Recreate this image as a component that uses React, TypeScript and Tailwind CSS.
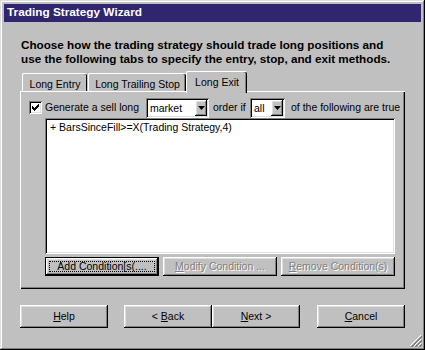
import React from "react";

const raised =
  "shadow-[inset_-1px_-1px_0_#000,inset_1px_1px_0_#fff,inset_-2px_-2px_0_#808080,inset_2px_2px_0_#dfdfdf]";
const sunken =
  "shadow-[inset_1px_1px_0_#808080,inset_-1px_-1px_0_#fff,inset_2px_2px_0_#000,inset_-2px_-2px_0_#dfdfdf]";

function Combo({ value, width }: { value: string; width: string }) {
  return (
    <div className={`flex h-[20px] items-stretch bg-white p-[2px] ${sunken} ${width}`}>
      <span className="flex-1 pl-[2px] leading-[16px]">{value}</span>
      <span className={`flex w-[12px] items-center justify-center bg-[#c0c0c0] ${raised}`}>
        <svg width="7" height="4" viewBox="0 0 7 4">
          <path d="M0 0h7L3.5 4z" fill="#000" />
        </svg>
      </span>
    </div>
  );
}

function Button({
  children,
  disabled,
  focused,
  className = "",
}: {
  children: React.ReactNode;
  disabled?: boolean;
  focused?: boolean;
  className?: string;
}) {
  if (focused) {
    return (
      <div className={`border border-black bg-[#c0c0c0] ${className}`}>
        <div className={`flex h-full items-center justify-center p-[3px] ${raised}`}>
          <span className="flex h-full w-full items-center justify-center border border-dotted border-black">
            {children}
          </span>
        </div>
      </div>
    );
  }
  return (
    <div
      className={`flex items-center justify-center bg-[#c0c0c0] ${raised} ${
        disabled ? "text-[#808080] [text-shadow:1px_1px_0_#fff]" : ""
      } ${className}`}
    >
      {children}
    </div>
  );
}

export default function App() {
  return (
    <div className="relative flex h-[350px] w-[425px] flex-col whitespace-nowrap bg-[#c0c0c0] p-[4px] font-['Liberation_Sans',Arial,sans-serif] text-[10.5px] text-black shadow-[inset_-1px_-1px_0_#000,inset_1px_1px_0_#dfdfdf,inset_-2px_-2px_0_#808080,inset_2px_2px_0_#fff]">
      {/* Title bar */}
      <div className="flex h-[18px] items-center bg-[#30256f] pl-[3px] text-[11.8px] font-bold text-white">
        Trading Strategy Wizard
      </div>

      <div className="px-[16px]">
        <p className="mt-[16px] pl-[1px] text-[11.7px] font-bold leading-[14px]">
          Choose how the trading strategy should trade long positions and
          <br />
          use the following tabs to specify the entry, stop, and exit methods.
        </p>

        {/* Tabs */}
        <div className="mt-[5px] flex h-[20px] items-end pl-[2px]">
          <div className="flex h-[18px] w-[65px] justify-center rounded-tl-[2px] rounded-tr-[2px] border-l border-t border-white pt-[3px] shadow-[inset_-1px_0_0_#000]">
            Long Entry
          </div>
          <div className="ml-[1px] flex h-[18px] w-[98px] justify-center rounded-tl-[2px] rounded-tr-[2px] border-l border-t border-white pt-[3px] shadow-[inset_-1px_0_0_#000,inset_-2px_0_0_#808080]">
            Long Trailing Stop
          </div>
          <div className="relative z-10 -mb-[2px] flex h-[22px] w-[61px] justify-center rounded-tl-[2px] rounded-tr-[2px] border-l border-t border-white bg-[#c0c0c0] pt-[3px] shadow-[inset_-1px_0_0_#000,inset_-2px_0_0_#808080]">
            Long Exit
          </div>
        </div>

        {/* Tab panel */}
        <div className="h-[198px] border-l border-t border-white pt-[5px] shadow-[inset_-1px_-1px_0_#000,inset_-2px_-2px_0_#808080]">
          <div className="flex h-[21px] items-center pl-[8px]">
            <div className={`flex h-[13px] w-[13px] items-center justify-center bg-white ${sunken}`}>
              <svg width="7" height="7" viewBox="0 0 7 7">
                <path d="M0 2h1v1h1v1h1V3h1V2h1V1h1V0h1v3H6v1H5v1H4v1H3v1H2V6H1V5H0z" fill="#000" />
              </svg>
            </div>
            <span className="ml-[3px] w-[101px]">Generate a sell long</span>
            <Combo value="market" width="w-[63px]" />
            <span className="ml-[4px] w-[37px]">order if</span>
            <Combo value="all" width="w-[35px]" />
            <span className="ml-[6px]">of the following are true</span>
          </div>

          <div className={`ml-[24px] h-[136px] w-[350px] bg-white px-[5px] pt-[3px] leading-[13px] ${sunken}`}>
            + BarsSinceFill&gt;=X(Trading Strategy,4)
          </div>

          <div className="ml-[24px] mt-[3px] flex gap-[4px]">
            <Button focused className="h-[19px] w-[114px]">
              Add Condition[s(....
            </Button>
            <Button disabled className="h-[19px] w-[114px]">
              <span>
                <u>M</u>odify Condition ...
              </span>
            </Button>
            <Button disabled className="h-[19px] w-[114px]">
              <span>
                <u>R</u>emove Condition(s)
              </span>
            </Button>
          </div>
        </div>

        {/* Wizard buttons */}
        <div className="mt-[16px] flex">
          <Button className="h-[23px] w-[88px]">
            <span>
              <u>H</u>elp
            </span>
          </Button>
          <Button className="ml-[16px] h-[23px] w-[88px]">
            <span>
              &lt; <u>B</u>ack
            </span>
          </Button>
          <Button className="h-[23px] w-[88px]">
            <span>
              <u>N</u>ext &gt;
            </span>
          </Button>
          <Button className="ml-[17px] h-[23px] w-[88px]">
            <span>
              <u>C</u>ancel
            </span>
          </Button>
        </div>
      </div>

      {/* Size grip */}
      <svg className="absolute bottom-[3px] right-[3px]" width="12" height="12" viewBox="0 0 12 12">
        <path d="M11 0L0 11M11 4L4 11M11 8L8 11" stroke="#fff" strokeWidth="1" />
        <path d="M12 1L1 12M12 2L2 12M12 5L5 12M12 6L6 12M12 9L9 12M12 10L10 12" stroke="#808080" strokeWidth="1" />
      </svg>
    </div>
  );
}
